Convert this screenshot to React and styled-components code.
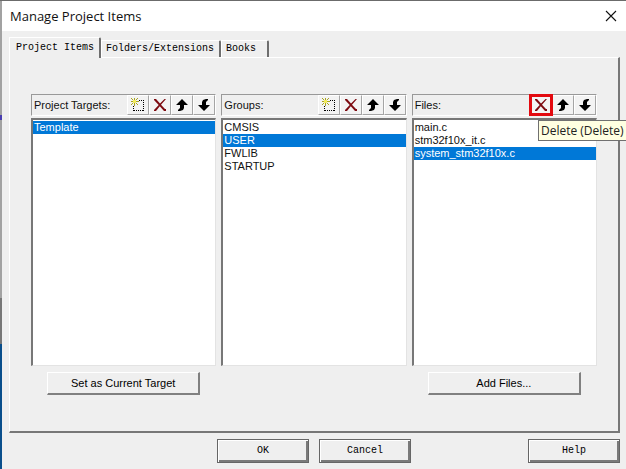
import React, { useState } from 'react'
import styled, { createGlobalStyle } from 'styled-components'

const GlobalStyle = createGlobalStyle`
  * {
    box-sizing: border-box;
  }

  body {
    margin: 0;
    overflow: hidden;
  }

  button {
    color: #000;
    border-radius: 0;
    padding: 0;
  }
`

const Desktop = styled.div`
  min-height: 100vh;
  display: flex;
  padding: 1px 0 0 2px;
  background: linear-gradient(
    #6b6b6b 0, #6b6b6b 1px, #a2a2a2 1px, #a2a2a2 115px,
    #4a3fb0 115px, #4a3fb0 120px, #a2a2a2 120px, #a2a2a2 298px,
    #777 298px, #777 344px, #0a4f8c 344px
  );
`

const Dialog = styled.main`
  flex: 1;
  display: flex;
  flex-direction: column;
  background: #efefef;
`

const TitleBar = styled.header`
  height: 30px;
  padding: 0 8px;
  display: flex;
  align-items: center;
  justify-content: space-between;
  background: #fff;
`

const Title = styled.h1`
  margin: 0;
  font: 400 13px/20px "Open Sans", "Noto Sans", sans-serif;
  color: #111;
`

const CloseButton = styled.button`
  width: 14px;
  height: 14px;
  display: flex;
  align-items: center;
  justify-content: center;
  border: 0;
  background: none;
`

const TabBar = styled.div`
  display: flex;
  align-items: flex-end;
  padding: 6px 7px 0;
`

const Tab = styled.button`
  height: ${props => props.$active ? '21px' : '17px'};
  margin-bottom: ${props => props.$active ? '-1px' : '0'};
  padding: 0 ${props => props.$wide ? '11px' : '5px'} 0 ${props => props.$active ? '6px' : '4px'};
  position: relative;
  z-index: ${props => props.$active ? 1 : 0};
  font: 10px/14px "Liberation Mono", monospace;
  white-space: nowrap;
  background: #efefef;
  border: solid;
  border-width: 1px 2px 0 1px;
  border-color: #fff #6e6e6e #fff #fff;
  border-top-right-radius: 2px;
`

const Panel = styled.section`
  flex: 1;
  display: flex;
  margin: 0 6px 0 7px;
  padding: 36px 21px 36px;
  border: solid;
  border-width: 1px 2px 2px 1px;
  border-color: #fff #777 #777 #fff;
`

const Columns = styled.div`
  flex: 1;
  display: grid;
  grid-template-columns: repeat(3, 1fr);
  gap: 5px;
`

const Column = styled.div`
  display: flex;
  flex-direction: column;
  min-width: 0;
`

const ColumnHeader = styled.div`
  height: 22px;
  display: flex;
  align-items: center;
  justify-content: space-between;
  padding-left: 2px;
  border: 1px solid;
  border-color: #999 #fff #fff #999;
`

const Label = styled.span`
  font: 11px/14px "Liberation Sans", Arial, sans-serif;
  color: #111;
`

const Tools = styled.div`
  display: flex;
`

const ToolSlot = styled.div`
  position: relative;
`

const ToolButton = styled.button`
  width: 22px;
  height: 20px;
  display: flex;
  align-items: center;
  justify-content: center;
  background: #f3f3f3;
  border: 1px solid;
  border-color: #fff #a5a5a5 #a5a5a5 #fff;
  outline: ${props => props.$marked ? '3px solid #e3090f' : 'none'};
  outline-offset: -2px;
`

const Tooltip = styled.span`
  position: absolute;
  z-index: 2;
  left: 8px;
  top: 25px;
  padding: 0 2px;
  font: 12px/19px "Open Sans", "Noto Sans", sans-serif;
  white-space: nowrap;
  color: #222;
  background: #ffffe1;
  border: 1px solid #707070;
`

const List = styled.ul`
  flex: 1;
  margin: 2px 0 0;
  padding: 1px 0 0;
  list-style: none;
  background: #fff;
  border: solid;
  border-width: 2px 1px 1px 2px;
  border-color: #777 #e3e3e3 #e3e3e3 #777;
`

const Item = styled.li`
  padding-left: 1px;
  font: 11px/13px "Liberation Sans", Arial, sans-serif;
  color: ${props => props.$selected ? '#fff' : '#111'};
  background: ${props => props.$selected ? '#0078d7' : 'transparent'};
  cursor: default;
`

const ColumnFooter = styled.div`
  height: 29px;
  padding: 6px 16px 0;
  display: flex;
`

const ActionButton = styled.button`
  flex: 1;
  height: 23px;
  font: 11px/14px "Liberation Sans", Arial, sans-serif;
  background: #efefef;
  border: solid;
  border-width: 1px 2px 2px 1px;
  border-color: #fff #808080 #808080 #fff;
`

const DialogFooter = styled.footer`
  display: flex;
  gap: 10px;
  padding: 6px 6px 6px 0;
  justify-content: flex-end;
`

const DialogButton = styled.button`
  width: 92px;
  height: 24px;
  margin-left: ${props => props.$apart ? '107px' : '0'};
  font: 10px/14px "Liberation Mono", monospace;
  background: #efefef;
  border: 1px solid #666;
  box-shadow: inset 1px 1px #fff, inset -2px -2px #7a7a7a;
`

const NewIcon = () => (
  <svg width="14" height="14" viewBox="0 0 14 14" shapeRendering="crispEdges" aria-hidden="true">
    <path d="M8 2.5H13M12.5 4V13M2.5 8V13M3 12.5H13" stroke="#000" strokeDasharray="1 1" fill="none" />
    <path d="M3 0H4V3H3ZM3 5H4V8H3ZM0 3H2V4H0ZM5 3H8V4H5ZM0 0H1V1H0ZM1 1H2V2H1ZM6 0H7V1H6ZM5 1H6V2H5ZM5 5H6V6H5ZM6 6H7V7H6ZM1 5H2V6H1ZM0 6H1V7H0Z" fill="#aaa51f" />
    <rect x="2" y="2" width="3" height="3" fill="#f2ec5a" />
  </svg>
)

const DeleteIcon = () => (
  <svg width="14" height="14" viewBox="0 0 14 14" aria-hidden="true">
    <path d="M1 1H3L7 5.500L11.500 1H13L8 6.800L12 11H13V13H11L6.800 8.200L3 13H1V12L5.700 6.900L1 2Z" fill="#7d0a10" />
  </svg>
)

const UpIcon = () => (
  <svg width="12" height="12" viewBox="0 0 12 12" aria-hidden="true">
    <path d="M6 0L12 6H8V9L7 11L4 12H2V11L4 9V6H0Z" fill="#000" />
  </svg>
)

const DownIcon = () => (
  <svg width="12" height="12" viewBox="0 0 12 12" aria-hidden="true">
    <path d="M6 12L12 6H8V3L10 1V0H8L5 1L4 3V6H0Z" fill="#000" />
  </svg>
)

const CloseIcon = () => (
  <svg width="12" height="12" viewBox="0 0 12 12" aria-hidden="true">
    <path d="M1 1L11 11M11 1L1 11" stroke="#111" strokeWidth="1.1" fill="none" />
  </svg>
)

const ItemColumn = ({ label, items, initial, canCreate, tip, action }) => {
  const [selected, setSelected] = useState(initial)

  return (
    <Column>
      <ColumnHeader>
        <Label id={label.replace(' ', '-')}>{label}:</Label>
        <Tools>
          {canCreate && <ToolButton aria-label="New"><NewIcon /></ToolButton>}
          <ToolSlot>
            <ToolButton aria-label="Delete" $marked={Boolean(tip)}><DeleteIcon /></ToolButton>
            {tip && <Tooltip role="tooltip">{tip}</Tooltip>}
          </ToolSlot>
          <ToolButton aria-label="Move up"><UpIcon /></ToolButton>
          <ToolButton aria-label="Move down"><DownIcon /></ToolButton>
        </Tools>
      </ColumnHeader>
      <List role="listbox" aria-labelledby={label.replace(' ', '-')} tabIndex={0}>
        {items.map(item => (
          <Item
            key={item}
            role="option"
            aria-selected={item === selected}
            $selected={item === selected}
            onClick={() => setSelected(item)}
          >
            {item}
          </Item>
        ))}
      </List>
      <ColumnFooter>
        {action && <ActionButton>{action}</ActionButton>}
      </ColumnFooter>
    </Column>
  )
}

const App = () => {
  return (
    <>
      <GlobalStyle />
      <Desktop>
        <Dialog>
          <TitleBar>
            <Title>Manage Project Items</Title>
            <CloseButton aria-label="Close"><CloseIcon /></CloseButton>
          </TitleBar>
          <TabBar role="tablist">
            <Tab role="tab" aria-selected="true" $active>Project Items</Tab>
            <Tab role="tab" aria-selected="false">Folders/Extensions</Tab>
            <Tab role="tab" aria-selected="false" $wide>Books</Tab>
          </TabBar>
          <Panel role="tabpanel">
            <Columns>
              <ItemColumn
                label="Project Targets"
                items={['Template']}
                initial="Template"
                canCreate
                action="Set as Current Target"
              />
              <ItemColumn
                label="Groups"
                items={['CMSIS', 'USER', 'FWLIB', 'STARTUP']}
                initial="USER"
                canCreate
              />
              <ItemColumn
                label="Files"
                items={['main.c', 'stm32f10x_it.c', 'system_stm32f10x.c']}
                initial="system_stm32f10x.c"
                tip="Delete (Delete)"
                action="Add Files..."
              />
            </Columns>
          </Panel>
          <DialogFooter>
            <DialogButton>OK</DialogButton>
            <DialogButton>Cancel</DialogButton>
            <DialogButton $apart>Help</DialogButton>
          </DialogFooter>
        </Dialog>
      </Desktop>
    </>
  )
}

export default App
